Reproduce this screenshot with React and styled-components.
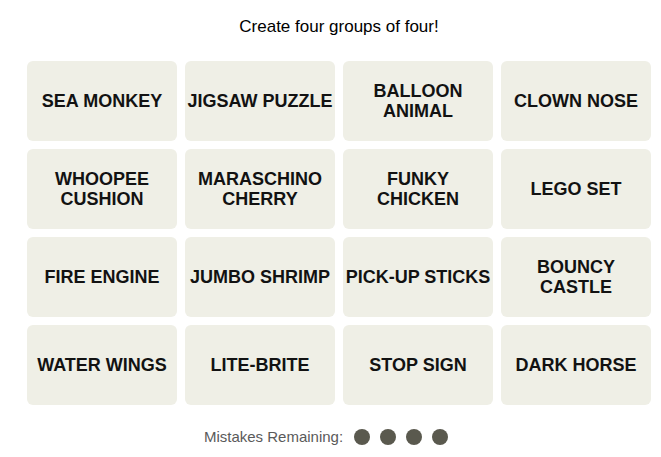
import React from "react";
import styled, { createGlobalStyle } from "styled-components";

// "\n" marks where the tile label breaks in the reference
const words = [
  "SEA MONKEY", "JIGSAW PUZZLE", "BALLOON\nANIMAL", "CLOWN NOSE",
  "WHOOPEE\nCUSHION", "MARASCHINO\nCHERRY", "FUNKY\nCHICKEN", "LEGO SET",
  "FIRE ENGINE", "JUMBO SHRIMP", "PICK-UP STICKS", "BOUNCY\nCASTLE",
  "WATER WINGS", "LITE-BRITE", "STOP SIGN", "DARK HORSE",
];

export default function App() {
  return (
    <>
      <GlobalStyle />
      <Page>
        <Prompt>Create four groups of four!</Prompt>
        <Board>
          {words.map((w) => (
            <Tile key={w}>{w}</Tile>
          ))}
        </Board>
        <Mistakes>
          <span>Mistakes Remaining:</span>
          <Dots>
            {[0, 1, 2, 3].map((i) => (
              <Dot key={i} />
            ))}
          </Dots>
        </Mistakes>
      </Page>
    </>
  );
}

const GlobalStyle = createGlobalStyle`
  body {
    margin: 0;
    background: #fff;
    font-family: "Liberation Sans", Arial, sans-serif;
  }
`;

const Page = styled.main`
  width: 624px;
  padding: 17px 0 0 27px;
  display: flex;
  flex-direction: column;
  align-items: center;
`;

const Prompt = styled.p`
  margin: 0 0 24px;
  font-size: 17px;
  line-height: 20px;
  color: #000;
`;

const Board = styled.div`
  display: grid;
  grid-template-columns: repeat(4, 150px);
  grid-auto-rows: 80px;
  gap: 8px;
`;

const Tile = styled.button`
  border: none;
  border-radius: 6px;
  background: #efefe6;
  padding: 0;
  font-family: "Liberation Sans", Arial, sans-serif;
  font-weight: 700;
  font-size: 18px;
  line-height: 20px;
  color: #121212;
  text-align: center;
  white-space: pre-line;
  display: flex;
  align-items: center;
  justify-content: center;
  cursor: pointer;
`;

const Mistakes = styled.div`
  margin-top: 23px;
  padding-right: 26px;
  display: flex;
  align-items: center;
  gap: 11px;
  font-size: 15px;
  color: #5a5a5a;
`;

const Dots = styled.div`
  display: flex;
  gap: 10px;
`;

const Dot = styled.span`
  width: 16px;
  height: 16px;
  border-radius: 50%;
  background: #5a594e;
`;
